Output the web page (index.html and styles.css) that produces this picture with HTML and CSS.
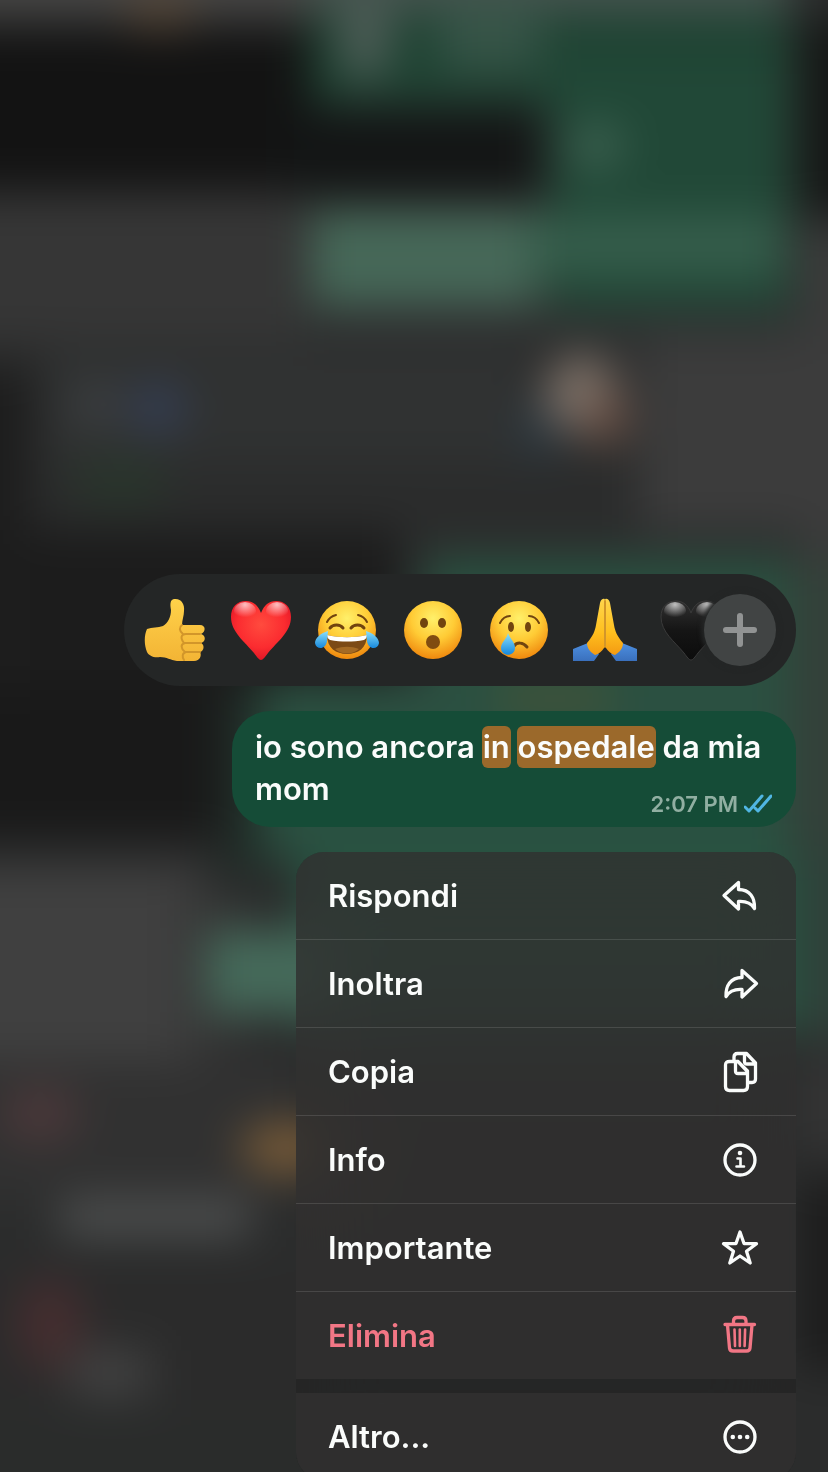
FILE: index.html
```html
<!DOCTYPE html>
<html lang="it">
<head>
    <meta charset="UTF-8">
    <meta name="viewport" content="width=device-width, initial-scale=1.0">
    <title>Messaggio</title>
    <link rel="stylesheet" href="styles.css">
</head>
<body>
    <!-- blurred chat behind the menu -->
    <svg class="backdrop" viewBox="0 0 828 1472" preserveAspectRatio="none" aria-hidden="true">
        <defs>
            <filter id="blur" filterUnits="userSpaceOnUse" x="-100" y="-100" width="1028" height="1672" color-interpolation-filters="sRGB">
                <feGaussianBlur stdDeviation="22"/>
            </filter>
        </defs>
        <g filter="url(#blur)">
            <rect x="-100" y="-100" width="1028" height="1672" fill="#2b2c2c"/>
            <rect x="-100" y="-100" width="420" height="114" fill="#484746"/>
            <ellipse cx="160" cy="10" rx="36" ry="24" fill="#544638"/>
            <rect x="-100" y="30" width="420" height="160" fill="#131313"/>
            <rect x="280" y="110" width="260" height="84" fill="#131515"/>
            <rect x="-100" y="196" width="404" height="144" fill="#363636"/>
            <rect x="300" y="300" width="528" height="40" fill="#303232"/>
            <rect x="310" y="-100" width="480" height="204" fill="#1f4333"/>
            <rect x="310" y="-100" width="480" height="112" fill="#46544f"/>
            <ellipse cx="365" cy="40" rx="26" ry="40" fill="#4e5d57"/>
            <rect x="440" y="0" width="100" height="70" fill="#365447"/>
            <rect x="550" y="60" width="240" height="250" fill="#214837"/>
            <ellipse cx="596" cy="146" rx="28" ry="24" fill="#3c6150"/>
            <rect x="310" y="210" width="230" height="96" fill="#466858"/>
            <rect x="530" y="215" width="254" height="60" fill="#355d4b"/>
            <rect x="800" y="20" width="128" height="190" fill="#151716"/>
            <rect x="800" y="230" width="128" height="360" fill="#3b3b3b"/>
            <rect x="640" y="340" width="200" height="190" fill="#3c3c3c"/>
            <rect x="-100" y="370" width="130" height="400" fill="#1d1d1d"/>
            <rect x="50" y="350" width="470" height="110" fill="#303232"/>
            <ellipse cx="96" cy="404" rx="24" ry="20" fill="#3e4144"/>
            <ellipse cx="158" cy="408" rx="28" ry="26" fill="#343e54"/>
            <ellipse cx="120" cy="482" rx="50" ry="24" fill="#28352b"/>
            <ellipse cx="540" cy="430" rx="24" ry="30" fill="#2c3840"/>
            <ellipse cx="582" cy="394" rx="38" ry="40" fill="#7c7168"/>
            <ellipse cx="606" cy="418" rx="24" ry="28" fill="#6b5146"/>
            <rect x="30" y="530" width="370" height="160" fill="#1c1c1c"/>
            <rect x="-100" y="690" width="320" height="150" fill="#191919"/>
            <rect x="220" y="690" width="50" height="190" fill="#202a26"/>
            <rect x="425" y="556" width="365" height="130" fill="#2a5040"/>
            <rect x="260" y="680" width="530" height="180" fill="#2b5041"/>
            <rect x="500" y="690" width="110" height="16" fill="#5b542f"/>
            <rect x="300" y="830" width="500" height="200" fill="#285241"/>
            <rect x="790" y="560" width="128" height="300" fill="#344039"/>
            <rect x="800" y="840" width="128" height="200" fill="#2f4039"/>
            <rect x="-100" y="868" width="300" height="210" fill="#404040"/>
            <rect x="180" y="890" width="60" height="160" fill="#373737"/>
            <rect x="206" y="930" width="140" height="84" fill="#456a5a"/>
            <rect x="-100" y="1060" width="400" height="140" fill="#313131"/>
            <ellipse cx="40" cy="1114" rx="40" ry="28" fill="#4b383a"/>
            <ellipse cx="288" cy="1148" rx="48" ry="26" fill="#785b38"/>
            <rect x="60" y="1200" width="190" height="36" fill="#4f5151"/>
            <rect x="-100" y="1270" width="420" height="130" fill="#2b2b2b"/>
            <ellipse cx="50" cy="1324" rx="34" ry="46" fill="#452d2f"/>
            <rect x="70" y="1350" width="80" height="46" fill="#424242"/>
            <rect x="-100" y="1420" width="420" height="160" fill="#2a2c2b"/>
            <rect x="800" y="1060" width="128" height="90" fill="#343434"/>
            <rect x="800" y="1180" width="128" height="190" fill="#1c1c1c"/>
        </g>
    </svg>

    <!-- gradients shared by the reaction emoji -->
    <svg class="defs" width="0" height="0" aria-hidden="true">
        <defs>
            <radialGradient id="face" cx="50%" cy="30%" r="68%">
                <stop offset="0" stop-color="#fff06a"/>
                <stop offset="0.55" stop-color="#ffcb35"/>
                <stop offset="1" stop-color="#f08c10"/>
            </radialGradient>
            <radialGradient id="red" cx="50%" cy="40%" r="65%">
                <stop offset="0" stop-color="#ff4b3e"/>
                <stop offset="0.6" stop-color="#fb2c30"/>
                <stop offset="1" stop-color="#dc1224"/>
            </radialGradient>
            <linearGradient id="black" x1="0" y1="0" x2="0" y2="1">
                <stop offset="0" stop-color="#303030"/>
                <stop offset="0.5" stop-color="#151515"/>
                <stop offset="1" stop-color="#0c0c0c"/>
            </linearGradient>
            <radialGradient id="shine" cx="50%" cy="15%" r="70%">
                <stop offset="0" stop-color="#fff" stop-opacity="0.7"/>
                <stop offset="1" stop-color="#fff" stop-opacity="0"/>
            </radialGradient>
            <linearGradient id="tear" x1="0" y1="0" x2="0" y2="1">
                <stop offset="0" stop-color="#8be0fb"/>
                <stop offset="1" stop-color="#1688dc"/>
            </linearGradient>
            <linearGradient id="skin" x1="0" y1="0" x2="0" y2="1">
                <stop offset="0" stop-color="#ffd24a"/>
                <stop offset="1" stop-color="#f3b435"/>
            </linearGradient>
            <linearGradient id="hands" x1="0" y1="0" x2="0" y2="1">
                <stop offset="0" stop-color="#ffd64c"/>
                <stop offset="0.6" stop-color="#ffbf1e"/>
                <stop offset="1" stop-color="#f39a12"/>
            </linearGradient>
            <linearGradient id="sleeve" x1="0" y1="0" x2="0" y2="1">
                <stop offset="0" stop-color="#4d8fe0"/>
                <stop offset="1" stop-color="#3a70bd"/>
            </linearGradient>
        </defs>
    </svg>

    <main class="screen">
        <div class="reactions">
            <button type="button" class="reaction" aria-label="Mi piace">
                <svg viewBox="0 0 64 64">
                    <path fill="url(#skin)" d="M4 31C9 29 15 30 20 28C25 25 28 19 28 12C27 6 27 2 31 1C38 0 42 6 41 13C41 18 39 22 39 27H57C63 27 63 34 58 36C63 37 63 44 58 45C62 47 61 53 57 54C59 57 57 63 51 63H34C27 62 24 59 17 59C11 60 6 58 4 54C1 47 1 37 4 31Z"/>
                    <path class="crease" d="M57 36H43C38 36 37 40 41 45M58 45H42C37 46 38 51 42 54M57 54H43C39 55 39 59 41 62M39 27C36 29 36 33 40 36"/>
                </svg>
            </button>
            <button type="button" class="reaction" aria-label="Cuore">
                <svg viewBox="0 0 64 64">
                    <path fill="url(#red)" d="M32 62C30 62 28 59 25 55C16 44 2 34 2 19C2 9 8 3 17 3C24 3 29 7 32 15C35 7 40 3 47 3C56 3 62 9 62 19C62 34 48 44 39 55C36 59 34 62 32 62Z"/>
                    <ellipse cx="16" cy="13" rx="11" ry="9" fill="url(#shine)"/>
                    <ellipse cx="48" cy="13" rx="11" ry="9" fill="url(#shine)"/>
                </svg>
            </button>
            <button type="button" class="reaction" aria-label="Risata">
                <svg viewBox="0 0 64 64">
                    <circle cx="32" cy="32" r="29" fill="url(#face)"/>
                    <path class="brow" d="M12 24C14 20 17 18 21 17M52 24C50 20 47 18 43 17"/>
                    <path class="brow thick" d="M15 30C18 26 25 26 28 30M36 30C39 26 46 26 49 30"/>
                    <path fill="#7c4a15" d="M12 37C24 40 40 40 52 37C52 50 43 56 32 56C21 56 12 50 12 37Z"/>
                    <path fill="#fff" d="M12 37C24 40 40 40 52 37C52 39 51 41 49 42C38 44 26 44 15 42C13 41 12 39 12 37Z"/>
                    <path fill="#a46a24" d="M20 51C28 48 36 48 44 51C37 57 27 57 20 51Z"/>
                    <path fill="url(#tear)" d="M13 33C6 35 0 40 0 45C1 52 11 52 12 43ZM51 33C58 35 64 40 64 45C63 52 53 52 52 43Z"/>
                </svg>
            </button>
            <button type="button" class="reaction" aria-label="Stupore">
                <svg viewBox="0 0 64 64">
                    <circle cx="32" cy="32" r="29" fill="url(#face)"/>
                    <ellipse cx="23" cy="25" rx="4" ry="5" fill="#71440f"/>
                    <ellipse cx="41" cy="25" rx="4" ry="5" fill="#71440f"/>
                    <circle cx="32" cy="44" r="7" fill="#804c10"/>
                </svg>
            </button>
            <button type="button" class="reaction" aria-label="Tristezza">
                <svg viewBox="0 0 64 64">
                    <circle cx="32" cy="32" r="29" fill="url(#face)"/>
                    <path class="brow" d="M13 25C15 21 19 18 23 18M42 18C46 18 50 21 52 25"/>
                    <ellipse cx="24" cy="29" rx="3" ry="5" fill="#71440f"/>
                    <ellipse cx="41" cy="29" rx="3" ry="5" fill="#71440f"/>
                    <path class="brow thick" d="M27 48C30 44 36 44 40 49"/>
                    <path fill="url(#tear)" d="M21 35C23 41 28 44 28 50C28 59 14 59 14 50C14 44 20 41 21 35Z"/>
                </svg>
            </button>
            <button type="button" class="reaction" aria-label="Grazie">
                <svg viewBox="0 0 64 64">
                    <path fill="url(#sleeve)" d="M0 51L15 45L26 56L21 63H0ZM64 51L49 45L38 56L43 63H64Z"/>
                    <path fill="url(#hands)" d="M31 50C29 53 26 56 22 57C17 54 14 50 14 45C20 38 22 33 23 27L27 5C28 0 32 0 32 2C32 0 36 0 37 5L41 27C42 33 44 38 50 45C50 50 47 54 42 57C38 56 35 53 33 50C32 49 32 49 31 50Z"/>
                    <path class="crease" d="M32 3V48"/>
                </svg>
            </button>
            <button type="button" class="reaction" aria-label="Cuore nero">
                <svg viewBox="0 0 64 64">
                    <path fill="url(#black)" stroke="#3a3a3a" d="M32 62C30 62 28 59 25 55C16 44 2 34 2 19C2 9 8 3 17 3C24 3 29 7 32 15C35 7 40 3 47 3C56 3 62 9 62 19C62 34 48 44 39 55C36 59 34 62 32 62Z"/>
                    <ellipse cx="16" cy="13" rx="11" ry="9" fill="url(#shine)"/>
                    <ellipse cx="48" cy="13" rx="11" ry="9" fill="url(#shine)"/>
                </svg>
            </button>
            <button type="button" class="add" aria-label="Altre reazioni">
                <svg viewBox="0 0 36 36"><path d="M18 4V32M4 18H32"/></svg>
            </button>
        </div>

        <div class="bubble">
            <p class="text">io sono ancora <mark>in</mark> <mark>ospedale</mark> da mia<br>mom</p>
            <div class="meta">
                <time>2:07 PM</time>
                <svg class="ticks" viewBox="0 0 28 20" role="img" aria-label="Letto">
                    <path d="M1 13L5 17L18 2M11 14L14 17L27 2"/>
                </svg>
            </div>
        </div>

        <div class="menu">
            <div class="group">
                <button type="button" class="item">Rispondi
                    <svg class="icon" viewBox="0 0 40 40"><path d="M18.5 6.5L4 19.5L18.5 33V25.5C26 25 31 27 34.5 32.5C35 22 30 13.5 18.5 13.5Z"/></svg>
                </button>
                <button type="button" class="item">Inoltra
                    <svg class="icon" viewBox="0 0 40 40"><path d="M22 6.5L36.5 19.5L22 33V25.5C14.5 25 9.5 27 6 32.5C5.5 22 10.5 13.5 22 13.5Z"/></svg>
                </button>
                <button type="button" class="item">Copia
                    <svg class="icon" viewBox="0 0 40 40"><path d="M14 9V5C14 2.5 15 1.5 17.5 1.5H26.5L35.5 11V27C35.5 29.5 34.5 30.5 32 30.5H28M24.5 2V9.500C24.5 11.5 25 12 27 12H35M18 9.5H9.500C7 9.5 5.5 10.5 5.5 13V34.500C5.5 37 7 38.5 9.5 38.5H23.500C26 38.5 27.5 37 27.5 34.5V19ZM15.5 10V19C15.5 21 16 21.5 18 21.5H27M18 9.5L27 19"/></svg>
                </button>
                <button type="button" class="item">Info
                    <svg class="icon" viewBox="0 0 40 40"><circle cx="20" cy="20" r="15"/><path class="thin" d="M17.5 18.5H20.5V26.5M16.5 26.5H24"/><circle class="dot" cx="20" cy="13" r="2.3"/></svg>
                </button>
                <button type="button" class="item">Importante
                    <svg class="icon" viewBox="0 0 40 40"><path d="M20 4L24 15.5L36.5 15.7L26.5 23.3L30.2 35L20 28L9.8 35L13.5 23.3L3.5 15.7L16 15.5Z"/></svg>
                </button>
                <button type="button" class="item danger">Elimina
                    <svg class="icon" viewBox="0 0 40 40"><path d="M5 8.5H34.5M13.5 8V5C13.5 2.5 14.5 1.5 17 1.5H22.500C25 1.5 26 2.5 26 5V8M7.5 9L9.5 32C9.7 34 11 35 13 35H26.5C28.5 35 29.8 34 30 32L32 9"/><path class="thin" d="M14.5 13.5L15 30M19.8 13.5V30M25.1 13.5L24.6 30"/></svg>
                </button>
            </div>
            <div class="group">
                <button type="button" class="item">Altro...
                    <svg class="icon" viewBox="0 0 40 40"><circle cx="20" cy="20" r="15"/><circle class="dot" cx="12.8" cy="20" r="2.3"/><circle class="dot" cx="20" cy="20" r="2.3"/><circle class="dot" cx="27.2" cy="20" r="2.3"/></svg>
                </button>
            </div>
        </div>
    </main>
</body>
</html>
```
FILE: styles.css
```css
* { margin: 0; padding: 0; box-sizing: border-box; }
body {
    background: #2b2c2c;
    color: #fafcfb;
    font-family: Inter, "Liberation Sans", sans-serif;
    font-size: 31px;
    font-weight: 600;
    overflow: hidden;
}
button {
    border: 0;
    background: none;
    color: inherit;
    font: inherit;
    cursor: pointer;
}
.backdrop {
    position: fixed;
    inset: 0;
    width: 100%;
    height: 100%;
}
.defs {
    position: absolute;
}
.screen {
    position: relative;
    height: 100vh;
    overflow: hidden;
    padding: 574px 32px 0;
    display: flex;
    flex-direction: column;
    align-items: flex-end;
    gap: 25px;
}
.screen > * {
    flex-shrink: 0;
    max-width: 100%;
}

/* reactions */
.reactions {
    display: flex;
    align-items: center;
    height: 112px;
    padding: 0 20px 0 8px;
    border-radius: 56px;
    background: #242626;
}
.reaction {
    width: 86px;
    height: 86px;
    display: flex;
    align-items: center;
    justify-content: center;
}
.reaction svg {
    width: 64px;
    height: 64px;
}
.crease, .brow {
    fill: none;
    stroke: #d2962a;
    stroke-width: 2;
    stroke-linecap: round;
}
.brow {
    stroke: #71440f;
}
.thick {
    stroke-width: 3;
}
.add {
    position: relative;
    width: 72px;
    height: 72px;
    margin-left: -30px;
    border-radius: 50%;
    background: #414444;
    box-shadow: 0 0 4px 3px #242626;
    display: flex;
    align-items: center;
    justify-content: center;
}
.add svg {
    width: 36px;
    height: 36px;
    fill: none;
    stroke: #919393;
    stroke-width: 6;
    stroke-linecap: round;
}

/* message */
.bubble {
    display: grid;
    width: 564px;
    padding: 15px 24px 17px 23px;
    border-radius: 38px;
    background: #154c37;
}
.text, .meta {
    grid-area: 1 / 1;
}
.text {
    line-height: 42px;
}
mark {
    display: inline-block;
    margin: 0 -1px;
    padding: 0 1px;
    border-radius: 6px;
    background: #9b692b;
    color: inherit;
}
.meta {
    align-self: end;
    justify-self: end;
    display: flex;
    align-items: center;
    gap: 6px;
    color: #91afa2;
    font-size: 22px;
    line-height: 20px;
    margin-bottom: -4px;
}
.ticks {
    width: 28px;
    height: 20px;
    fill: none;
    stroke: #50b6e3;
    stroke-width: 3;
    stroke-linecap: round;
    stroke-linejoin: round;
}

/* context menu */
.menu {
    width: 500px;
    border-radius: 28px;
    overflow: hidden;
    background: rgba(32, 32, 32, 0.5);
    backdrop-filter: blur(40px);
    display: flex;
    flex-direction: column;
    gap: 14px;
}
.group {
    background: rgba(56, 54, 54, 0.55);
}
.item {
    display: flex;
    align-items: center;
    justify-content: space-between;
    width: 100%;
    height: 88px;
    padding: 0 36px 0 32px;
    border-bottom: 1px solid rgba(255, 255, 255, 0.12);
    text-align: left;
}
.item:last-child {
    height: 87px;
    border-bottom: 0;
}
.icon {
    width: 40px;
    height: 40px;
    overflow: visible;
    fill: none;
    stroke: currentColor;
    stroke-width: 3.3;
    stroke-linecap: round;
    stroke-linejoin: round;
}
.thin {
    stroke-width: 2.6;
}
.dot {
    fill: currentColor;
    stroke: none;
}
.danger {
    color: #f27685;
}
```
